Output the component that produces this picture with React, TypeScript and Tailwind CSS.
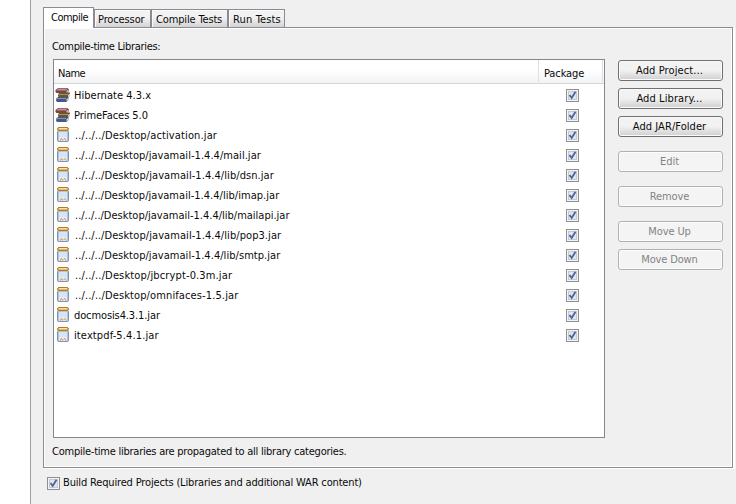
import React from "react";

type Kind = "lib" | "jar";

const rows: { kind: Kind; name: string; tracking: string }[] = [
  { kind: "lib", name: "Hibernate 4.3.x", tracking: "-ml-px tracking-[0.030px]" },
  { kind: "lib", name: "PrimeFaces 5.0", tracking: "-ml-px tracking-[-0.050px]" },
  { kind: "jar", name: "../../../Desktop/activation.jar", tracking: "tracking-[0.130px]" },
  { kind: "jar", name: "../../../Desktop/javamail-1.4.4/mail.jar", tracking: "tracking-[0.040px]" },
  { kind: "jar", name: "../../../Desktop/javamail-1.4.4/lib/dsn.jar", tracking: "tracking-[0.070px]" },
  { kind: "jar", name: "../../../Desktop/javamail-1.4.4/lib/imap.jar", tracking: "tracking-[0.030px]" },
  { kind: "jar", name: "../../../Desktop/javamail-1.4.4/lib/mailapi.jar", tracking: "tracking-[0px]" },
  { kind: "jar", name: "../../../Desktop/javamail-1.4.4/lib/pop3.jar", tracking: "tracking-[0.070px]" },
  { kind: "jar", name: "../../../Desktop/javamail-1.4.4/lib/smtp.jar", tracking: "tracking-[0.050px]" },
  { kind: "jar", name: "../../../Desktop/jbcrypt-0.3m.jar", tracking: "tracking-[0.140px]" },
  { kind: "jar", name: "../../../Desktop/omnifaces-1.5.jar", tracking: "tracking-[0.120px]" },
  { kind: "jar", name: "docmosis4.3.1.jar", tracking: "-ml-px tracking-[-0.110px]" },
  { kind: "jar", name: "itextpdf-5.4.1.jar", tracking: "-ml-px tracking-[0.120px]" },
];

const buttons: { label: string; enabled: boolean; style: string }[] = [
  { label: "Add Project...", enabled: true, style: "tracking-[0.100px]" },
  { label: "Add Library...", enabled: true, style: "mt-[7px] tracking-[0.100px]" },
  { label: "Add JAR/Folder", enabled: true, style: "mt-[7px] tracking-[0.060px]" },
  { label: "Edit", enabled: false, style: "mt-[14px]" },
  { label: "Remove", enabled: false, style: "mt-[14px] tracking-[-0.100px]" },
  { label: "Move Up", enabled: false, style: "mt-[14px] tracking-[-0.100px]" },
  { label: "Move Down", enabled: false, style: "mt-[7px] tracking-[-0.150px]" },
];

function Books() {
  return (
    <svg width="16" height="16" viewBox="0 0 16 16" className="shrink-0">
      <path d="M1.500 11 L4 9.500 H13.500 V13 L11.500 15 H2 L1 13.500 Z" fill="#46588c" />
      <path d="M11.500 12.500 L13.500 10.500 V12.500 L11.500 14.500 Z" fill="#d5d9e2" />
      <path d="M2 11.500 H11" stroke="#8795bd" />
      <path d="M3.500 6.500 L5 5.500 H15 V8.500 L13 10.500 H4 L3 9 Z" fill="#65572f" />
      <path d="M13 8 L15 6.500 V8.500 L13 10 Z" fill="#e3dcc4" />
      <path d="M4 7.500 H13" stroke="#a39467" />
      <path d="M0.500 3 L3 1 H12.500 L14 2.500 V4 L12 6 H1.500 L0.500 5 Z" fill="#7a4549" />
      <path d="M1.500 3 L3.500 1.500 H12.500 L11 3.500 H2 Z" fill="#c08f91" />
      <path d="M11.500 4 L13.500 2.500 V4 L11.500 5.500 Z" fill="#e2cfcf" />
    </svg>
  );
}

function Jar() {
  return (
    <svg width="16" height="16" viewBox="0 0 16 16" className="shrink-0">
      <rect x="2.500" y="3.500" width="11" height="11" rx="1.200" fill="#a9c6e4" stroke="#7b94b3" />
      <rect x="4" y="5" width="8" height="6" fill="#d3e5f6" />
      <rect x="4" y="10" width="8" height="4" fill="#efe9e4" />
      <path d="M5.500 13.500 V12.500 L6.500 11.500 L7.500 13.500 M8.700 12.500 L9.700 11.500 L11 13.500" fill="none" stroke="#c58a66" />
      <rect x="2.500" y="0.500" width="11" height="3" rx="1.500" fill="#eeb75a" stroke="#b3782a" />
      <path d="M4 1.500 H12" stroke="#fbe0a0" />
    </svg>
  );
}

function Check() {
  return (
    <span className="flex size-[13px] shrink-0 items-center justify-center border border-[#8e8f8f] bg-[#f4f4f4]">
      <svg width="11" height="11" viewBox="0 0 11 11">
        <rect x="1.500" y="1.500" width="8" height="8" fill="#e2e5ea" stroke="#c4cad2" />
        <path d="M2.500 5 L4.700 8 L8.500 1.800" fill="none" stroke="#4a62a3" strokeWidth="1.800" />
      </svg>
    </span>
  );
}

function Tab({ label, style }: { label: string; style: string }) {
  return (
    <div className={`${style} mt-[2px] flex h-[18px] items-center border border-b-0 border-[#898c95] bg-linear-to-b from-[#f2f2f2] from-45% to-[#d3d3d3] pt-[2px] shadow-[inset_1px_1px_0_#fafafa]`}>
      {label}
    </div>
  );
}

export default function App() {
  return (
    <div className="flex h-[504px] w-[736px] overflow-hidden bg-white font-['DejaVu_Sans_Condensed','DejaVu_Sans',sans-serif] text-[11px] leading-[14px] whitespace-nowrap text-[#0a0a0a]">
      <div className="w-[30px] shrink-0" />
      <div className="flex flex-1 flex-col border-l border-[#a0a0a0] bg-[#f0f0f0] pt-[7px] pl-3">
        <div className="relative z-10 flex h-[20px]">
          <div className="-mb-px flex h-[21px] w-[51px] items-center border border-b-0 border-[#898c95] bg-white pb-px pl-[7px] tracking-[-0.500px]">
            Compile
          </div>
          <Tab label="Processor" style="w-[57px] pl-[3px] tracking-[-0.120px]" />
          <Tab label="Compile Tests" style="w-[77px] pl-1 tracking-[-0.150px]" />
          <Tab label="Run Tests" style="w-[57px] pl-1 tracking-[0.150px]" />
        </div>
        <div className="h-[441px] w-[690px] border border-[#898c95] pt-[12px] pl-[9px] shadow-[inset_0_0_0_1px_#fff,1px_1px_0_#fff,2px_1px_0_#fff]">
          <div className="-ml-px h-[19px] tracking-[-0.320px]">Compile-time Libraries:</div>
          <div className="flex">
            <div className="h-[379px] w-[552px] border border-[#828790] bg-white">
              <div className="flex h-[24px] border-b border-[#d5d5d5] bg-linear-to-b from-white from-40% to-[#f2f3f5] pb-px">
                <div className="w-[485px] border-r border-[#dedfe1] pt-[7px] pl-1 tracking-[-0.500px]">Name</div>
                <div className="w-[64px] border-r border-[#dedfe1] pt-[7px] pl-[5px] tracking-[-0.100px]">Package</div>
              </div>
              <div className="pt-px">
                {rows.map((row) => (
                  <div key={row.name} className="flex h-5 items-center">
                    <div className="flex w-[512px] items-center gap-1 pl-px">
                      {row.kind === "lib" ? <Books /> : <Jar />}
                      <span className={`pt-[2px] ${row.tracking}`}>{row.name}</span>
                    </div>
                    <Check />
                  </div>
                ))}
              </div>
            </div>
            <div className="ml-[13px] flex w-[105px] flex-col pt-px">
              {buttons.map((b) => (
                <button
                  key={b.label}
                  disabled={!b.enabled}
                  className={`${b.style} flex h-[21px] items-center justify-center rounded-[3px] border pt-px pr-[2px] ${
                    b.enabled
                      ? "border-[#707070] bg-linear-to-b from-[#f2f2f2] from-48% to-[#cfcfcf] shadow-[inset_0_0_0_1px_#fafafa]"
                      : "border-[#adb2b5] bg-[#f4f4f4] text-[#838383] shadow-[inset_0_0_0_1px_#fcfcfc]"
                  }`}
                >
                  {b.label}
                </button>
              ))}
            </div>
          </div>
          <div className="-ml-px mt-[7px] tracking-[-0.240px]">Compile-time libraries are propagated to all library categories.</div>
        </div>
        <div className="mt-[8px] ml-1 flex items-center gap-[3px]">
          <Check />
          <span className="tracking-[-0.160px]">Build Required Projects (Libraries and additional WAR content)</span>
        </div>
      </div>
    </div>
  );
}
